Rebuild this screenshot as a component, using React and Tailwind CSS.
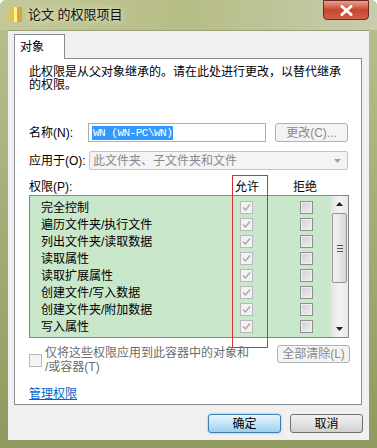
import React from "react";

const font = "font-['Liberation_Sans','Noto_Sans_CJK_SC',sans-serif]";

function Check() {
  return (
    <div className="w-[13px] h-[13px] border border-[#b8b8b8] bg-[#f2f2f2] flex items-center justify-center">
      <svg width="9" height="9" viewBox="0 0 9 9">
        <path d="M1 4.5 L3.5 7 L8 1.5" fill="none" stroke="#a8a8a8" strokeWidth="1.4" />
      </svg>
    </div>
  );
}

function Deny() {
  return (
    <div className="w-[13px] h-[13px] border border-[#8f8f8f] bg-[#f0f0f0] flex items-center justify-center">
      <div className="w-[9px] h-[9px] bg-gradient-to-br from-[#d2d2d8] to-[#ececf0]" />
    </div>
  );
}

const rows = [
  "完全控制",
  "遍历文件夹/执行文件",
  "列出文件夹/读取数据",
  "读取属性",
  "读取扩展属性",
  "创建文件/写入数据",
  "创建文件夹/附加数据",
  "写入属性",
  "",
];

export default function App() {
  return (
    <div className={`${font} relative w-[377px] h-[448px] overflow-hidden text-[12px] text-black bg-gradient-to-b from-[#b9c08f] via-[#a4ad76] to-[#8f9a60] rounded-t-[6px]`}>
      {/* title bar */}
      <div className="h-[30px] flex items-center pl-[10px] bg-gradient-to-r from-[#c4c99a] via-[#b7bd86] to-[#c9ccae]">
        <div className="w-[12px] h-[15px] flex mb-[2px]">
          <div className="w-[4px] h-full bg-[#e8c040]" />
          <div className="w-[3px] h-full bg-[#fff0a0]" />
          <div className="w-[5px] h-full bg-[#d8a830]" />
        </div>
        <span className="ml-[6px] mb-[2px] text-[13px] leading-none text-[#111] [text-shadow:0_0_6px_#f4f4e0]">论文 的权限项目</span>
      </div>
      {/* close button */}
      <div className="absolute top-0 right-[8px] w-[46px] h-[20px] rounded-b-[4px] border border-[#6b2a20] bg-gradient-to-b from-[#e8a090] via-[#c8452f] to-[#d0604a] flex items-center justify-center">
        <svg width="13" height="11" viewBox="0 0 13 11">
          <path d="M2 1.5 L11 9.5 M11 1.5 L2 9.5" stroke="#fff" strokeWidth="3" strokeLinecap="round" />
        </svg>
      </div>

      {/* client area */}
      <div className="ml-[8px] w-[361px] h-[410px] bg-[#f0f0f0] border-t border-[#9aa07a] relative">
        {/* tab */}
        <div className="ml-[6px] mt-[3px] w-[51px] h-[25px] bg-white border border-b-0 border-[#898c95] relative z-10 flex items-center pl-[5px] text-[12px]">
          对象
        </div>
        {/* panel */}
        <div className="ml-[6px] -mt-px w-[348px] h-[347px] bg-white border border-[#898c95] flex flex-col">
          <div className="pl-[14px] pt-[7px] leading-[13px]">
            此权限是从父对象继承的。请在此处进行更改，以替代继承<br />的权限。
          </div>
          {/* name row */}
          <div className="flex items-center mt-[31px] pl-[14px] h-[19px]">
            <span className="w-[59px]">名称(N):</span>
            <div className="w-[178px] h-[19px] border border-[#abadb3] flex items-center pl-[3px]">
              <span className="bg-[#3399ff] text-white text-[11px] leading-[14px] px-px font-['Liberation_Mono',monospace] tracking-[-0.5px]">WN (WN-PC\WN)</span>
            </div>
            <div className="ml-[9px] w-[73px] h-[19px] border border-[#adb2b5] rounded-[3px] bg-[#f4f4f4] text-[#8a8a8a] flex items-center justify-center text-[12px]">
              更改(C)...
            </div>
          </div>
          {/* apply row */}
          <div className="flex items-center mt-[9px] pl-[14px] h-[19px]">
            <span className="w-[60px]">应用于(O):</span>
            <div className="w-[259px] h-[19px] border border-[#c5c5c5] rounded-[2px] bg-[#f4f4f4] text-[#8a8a8a] flex items-center pl-[3px] relative">
              此文件夹、子文件夹和文件
              <svg className="absolute right-[6px] top-[7px]" width="7" height="4" viewBox="0 0 7 4">
                <path d="M0 0 L7 0 L3.5 4 Z" fill="#a0a0a0" />
              </svg>
            </div>
          </div>
          {/* header */}
          <div className="flex items-center mt-[9px] pl-[14px] h-[16px]">
            <span className="w-[206px]">权限(P):</span>
            <span className="w-[58px]">允许</span>
            <span>拒绝</span>
          </div>
          {/* list */}
          <div className="ml-[14px] w-[320px] h-[143px] border border-[#828790] bg-[#c9e7cb] relative overflow-hidden">
            <div className="pt-[3px]">
              {rows.map((r, i) => (
                <div key={i} className="flex items-center h-[17px] pl-[11px]">
                  <span className="w-[199px] leading-none">{r}</span>
                  <Check />
                  <div className="ml-[47px]">
                    <Deny />
                  </div>
                </div>
              ))}
            </div>
            {/* scrollbar */}
            <div className="absolute right-0 top-0 w-[17px] h-full bg-gradient-to-r from-[#e4e4e4] via-[#f4f4f4] to-[#e8e8e8] flex flex-col items-center">
              <div className="h-[16px] w-full flex items-center justify-center">
                <svg width="7" height="4" viewBox="0 0 7 4"><path d="M0 4 L7 4 L3.5 0 Z" fill="#222" /></svg>
              </div>
              <div className="mt-[1px] w-[15px] h-[70px] border border-[#979797] rounded-[2px] bg-gradient-to-r from-[#f3f3f3] via-[#e8e8e8] to-[#d6d6d6] flex items-center justify-center">
                <div className="flex flex-col gap-[2px]">
                  <div className="w-[6px] h-px bg-[#555]" />
                  <div className="w-[6px] h-px bg-[#555]" />
                  <div className="w-[6px] h-px bg-[#555]" />
                </div>
              </div>
              <div className="flex-1" />
              <div className="h-[16px] w-full flex items-center justify-center">
                <svg width="7" height="4" viewBox="0 0 7 4"><path d="M0 0 L7 0 L3.5 4 Z" fill="#222" /></svg>
              </div>
            </div>
          </div>
          {/* inherit checkbox row */}
          <div className="flex mt-[7px] pl-[14px] h-[28px]">
            <div className="mt-[9px] w-[13px] h-[13px] border border-[#b8b8b8] bg-[#f4f4f4]" />
            <div className="ml-[3px] w-[210px] leading-[14px] text-[#6d6d6d] pt-[1px]">
              仅将这些权限应用到此容器中的对象和<br />/或容器(T)
            </div>
            <div className="ml-[22px] w-[73px] h-[18px] border border-[#adb2b5] rounded-[3px] bg-[#f4f4f4] text-[#8a8a8a] flex items-center justify-center">
              全部清除(L)
            </div>
          </div>
          <div className="mt-[12px] pl-[14px]">
            <span className="text-[#0066cc] underline leading-none">管理权限</span>
          </div>
        </div>
        {/* bottom buttons */}
        <div className="flex mt-[9px] ml-[200px] gap-[9px]">
          <div className="w-[73px] h-[19px] rounded-[3px] border border-[#3c7fb1] bg-gradient-to-b from-[#e5f4fc] via-[#c4e5f6] to-[#98d1ef] shadow-[0_0_2px_#5fb0e8] flex items-center justify-center">
            确定
          </div>
          <div className="w-[73px] h-[19px] rounded-[3px] border border-[#707070] bg-gradient-to-b from-[#f2f2f2] via-[#e3e3e3] to-[#d0d0d0] flex items-center justify-center">
            取消
          </div>
        </div>
      </div>

      {/* red annotation box */}
      <div className="absolute left-[232px] top-[175px] w-[36px] h-[173px] border border-[#d8303a]" />
    </div>
  );
}
